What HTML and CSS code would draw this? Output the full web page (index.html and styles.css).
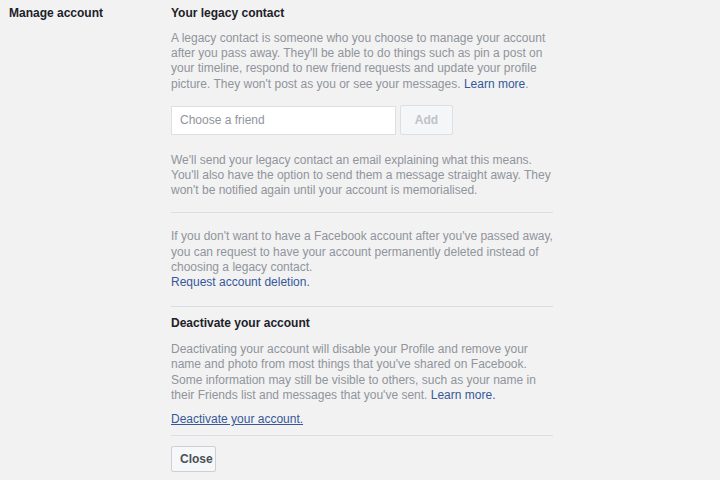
FILE: index.html
```html
<!DOCTYPE html>
<html lang="en">
<head>
<meta charset="UTF-8">
<meta name="viewport" content="width=device-width, initial-scale=1.0">
<title>Manage account</title>
<link rel="stylesheet" href="styles.css">
</head>
<body>
  <div class="settings-row">
    <div class="row-label">Manage account</div>
    <div class="row-content">
      <h3 class="section-title">Your legacy contact</h3>
      <p class="info">A legacy contact is someone who you choose to manage your account after you pass away. They'll be able to do things such as pin a post on your timeline, respond to new friend requests and update your profile picture. They won't post as you or see your messages. <a href="#" class="link">Learn more</a>.</p>

      <div class="friend-picker">
        <input type="text" class="friend-input" placeholder="Choose a friend">
        <button class="btn btn-disabled" disabled>Add</button>
      </div>

      <p class="info info-notice">We'll send your legacy contact an email explaining what this means. You'll also have the option to send them a message straight away. They won't be notified again until your account is memorialised.</p>

      <hr class="divider">

      <p class="info info-delete">If you don't want to have a Facebook account after you've passed away, you can request to have your account permanently deleted instead of choosing a legacy contact.<br><a href="#" class="link">Request account deletion.</a></p>

      <hr class="divider">

      <h3 class="section-title title-deactivate">Deactivate your account</h3>
      <p class="info info-deactivate">Deactivating your account will disable your Profile and remove your name and photo from most things that you've shared on Facebook. Some information may still be visible to others, such as your name in their Friends list and messages that you've sent. <a href="#" class="link">Learn more.</a></p>

      <a href="#" class="link link-underline">Deactivate your account.</a>

      <hr class="divider divider-last">

      <button class="btn btn-close">Close</button>
    </div>
  </div>
</body>
</html>
```

FILE: styles.css
```css
body {
  font-family: 'Liberation Sans', Arial, Helvetica, sans-serif;
  font-size: 12px;
  margin: 0;
  padding: 5px 0 0 9px;
  background-color: #f2f2f2;
  color: #1d2129;
}
.settings-row {
  display: flex;
}
.row-label {
  width: 162px;
  flex-shrink: 0;
  font-weight: bold;
  line-height: 16px;
}
.row-content {
  width: 382px;
  display: flex;
  flex-direction: column;
  align-items: flex-start;
}
.section-title {
  font-size: 12px;
  font-weight: bold;
  line-height: 16px;
  margin: 0;
}
.title-deactivate {
  margin-top: 8px;
}
.info {
  color: #90949c;
  line-height: 15.2px;
  margin: 10px 0 0 0;
}
.info-notice {
  margin-top: 18px;
}
.info-delete {
  margin-top: 16px;
}
.info-deactivate {
  margin-top: 11px;
  margin-right: -6px;
}
.link {
  color: #365899;
  text-decoration: none;
}
.link-underline {
  text-decoration: underline;
  line-height: 16px;
  margin-top: 8px;
}
.friend-picker {
  display: flex;
  gap: 4px;
  margin-top: 14px;
}
.friend-input {
  width: 225px;
  height: 29px;
  box-sizing: border-box;
  border: 1px solid #dddfe2;
  background: #fff;
  padding: 0 8px;
  font-family: inherit;
  font-size: 12px;
  color: #1d2129;
}
.friend-input::placeholder {
  color: #90949c;
}
.btn {
  font-family: inherit;
  font-size: 12px;
  font-weight: bold;
  border-radius: 2px;
  box-sizing: border-box;
  padding: 0 8px;
}
.btn-disabled {
  width: 53px;
  height: 30px;
  margin-top: -1px;
  background-color: #f5f6f7;
  border: 1px solid #dddfe2;
  color: #bec3c9;
}
.btn-close {
  height: 26px;
  width: 45px;
  background-color: #f6f7f9;
  border: 1px solid #ced0d4;
  color: #4b4f56;
  cursor: pointer;
}
.divider {
  align-self: stretch;
  border: none;
  border-top: 1px solid #dadde1;
  margin: 14px 0 0 0;
}
.info-delete + .divider {
  margin-top: 16px;
}
.divider-last {
  margin: 8px 0 10px 0;
}
```
